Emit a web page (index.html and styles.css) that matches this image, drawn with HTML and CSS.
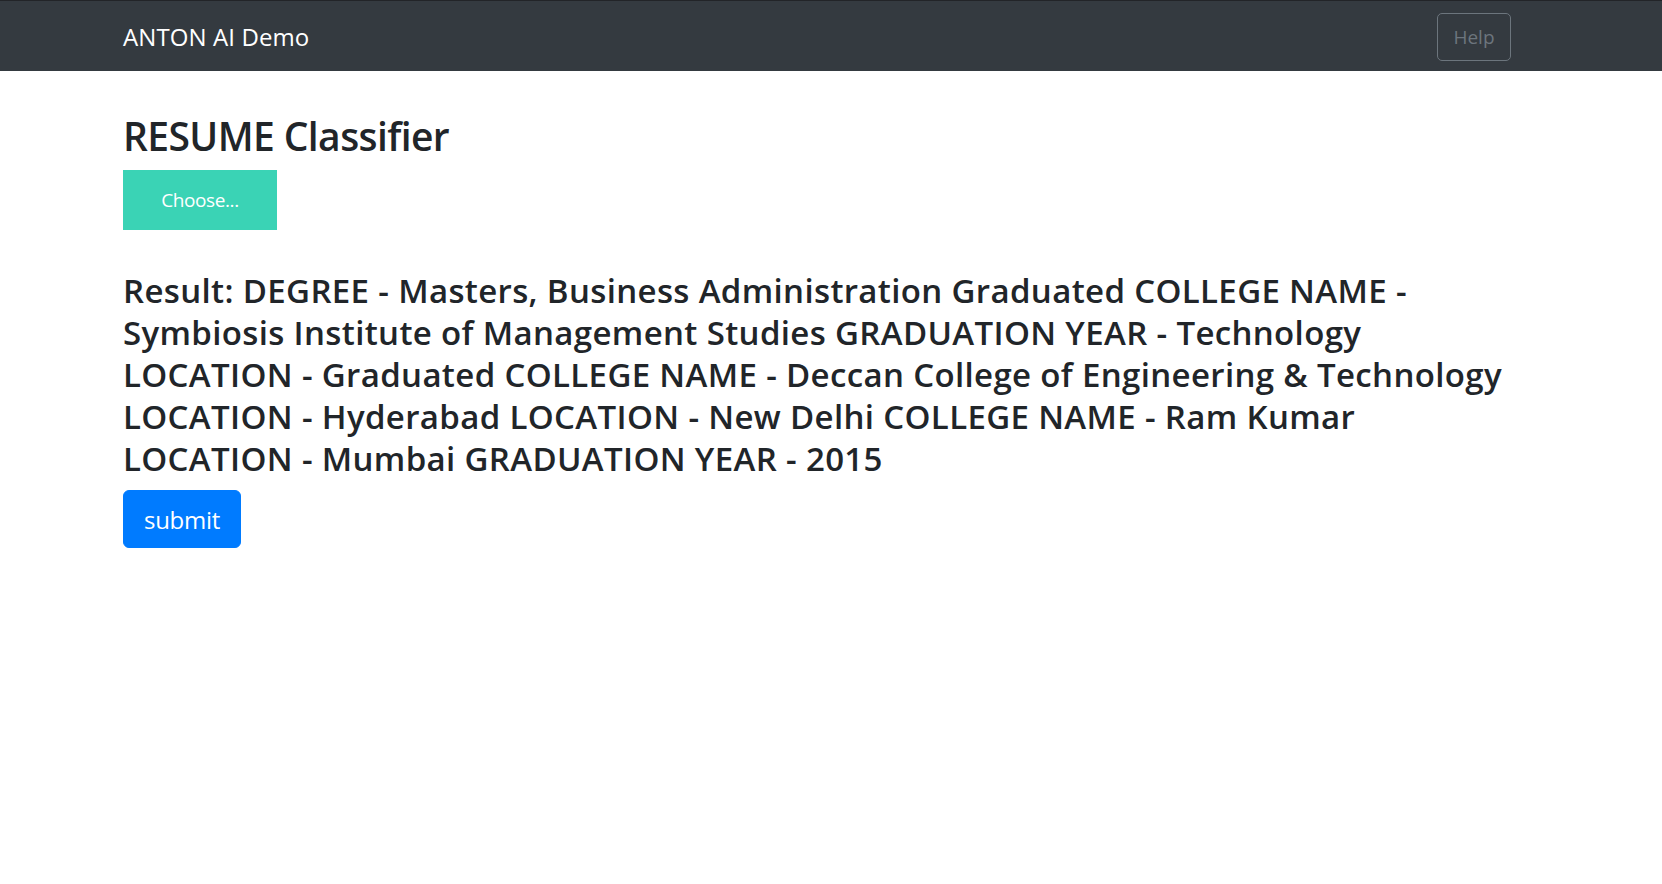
FILE: index.html
```html
<!DOCTYPE html>
<html lang="en">
<head>
<meta charset="utf-8">
<title>ANTON AI Demo</title>
<link rel="stylesheet" href="styles.css">
</head>
<body>
<nav class="navbar">
  <div class="nav-inner">
    <a class="brand" href="#">ANTON AI Demo</a>
    <button class="btn-help" type="button">Help</button>
  </div>
</nav>
<main class="container">
  <h2 class="title">RESUME Classifier</h2>
  <label class="choose">Choose...</label>
  <h3 class="result">Result: DEGREE - Masters, Business Administration Graduated COLLEGE NAME - Symbiosis Institute of Management Studies GRADUATION YEAR - Technology LOCATION - Graduated COLLEGE NAME - Deccan College of Engineering &amp; Technology LOCATION - Hyderabad LOCATION - New Delhi COLLEGE NAME - Ram Kumar LOCATION - Mumbai GRADUATION YEAR - 2015</h3>
  <button class="btn-submit" type="button">submit</button>
</main>
</body>
</html>
```
FILE: styles.css
```css
* { box-sizing: border-box; }
html, body { margin: 0; padding: 0; background: #fff; }
body {
  font-family: "Open Sans", "Noto Sans", sans-serif;
  color: #212529;
}
.navbar {
  background: #343a40;
  border-top: 1px solid #222428;
  height: 71px;
}
.nav-inner {
  width: 1388px;
  margin-left: 123px;
  height: 100%;
  display: flex;
  align-items: center;
  justify-content: space-between;
}
.brand {
  color: #fff;
  text-decoration: none;
  font-size: 24px;
  letter-spacing: 0.1px;
  line-height: 30px;
  margin-top: 2px;
}
.btn-help {
  font-family: inherit;
  background: transparent;
  border: 1px solid #6c757d;
  border-radius: 5px;
  color: #6c757d;
  font-size: 19px;
  width: 74px;
  height: 48px;
  padding: 0;
  margin-top: 1px;
}
.container {
  width: 1388px;
  margin-left: 123px;
  padding-top: 41px;
}
.title {
  margin: 0 0 10px;
  font-size: 39px;
  font-weight: 600;
  line-height: 48px;
  letter-spacing: -0.6px;
}
.choose {
  display: flex;
  align-items: center;
  justify-content: center;
  width: 154px;
  height: 60px;
  background: #3ad3b5;
  color: #fff;
  font-size: 19px;
  letter-spacing: -0.4px;
}
.result {
  margin: 40px 0 10px;
  font-size: 33px;
  font-weight: 600;
  line-height: 42px;
  letter-spacing: 0.35px;
}
.btn-submit {
  font-family: inherit;
  background: #007bff;
  border: 1px solid #007bff;
  border-radius: 6px;
  color: #fff;
  font-size: 24px;
  letter-spacing: -0.3px;
  height: 58px;
  width: 118px;
  padding: 0;
}
```
